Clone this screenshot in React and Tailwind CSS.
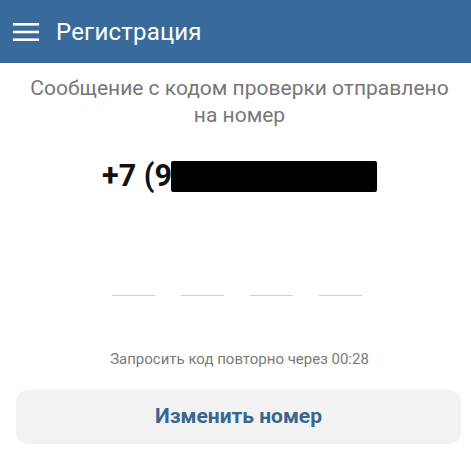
export default function App() {
  return (
    <div className="w-[471px] h-[452px] bg-white flex flex-col" style={{ fontFamily: 'Roboto, "Noto Sans", sans-serif' }}>
      {/* Header */}
      <div className="h-[63px] bg-[#386b9b] flex items-center px-[13px] shrink-0">
        <svg width="26" height="18" viewBox="0 0 26 18" className="shrink-0">
          <rect x="0" y="0" width="26" height="2.6" fill="#fff" />
          <rect x="0" y="7.7" width="26" height="2.6" fill="#fff" />
          <rect x="0" y="15.4" width="26" height="2.6" fill="#fff" />
        </svg>
        <span className="ml-[17px] text-white text-[24px] leading-none tracking-[0.2px]">Регистрация</span>
      </div>

      {/* Body */}
      <div className="flex flex-col items-center pl-[8px]">
        <p className="mt-[12px] text-center text-[#777] text-[21px] leading-[27px]">
          Сообщение с кодом проверки отправлено
          <br />
          на номер
        </p>

        <div className="mt-[30px] flex items-center h-[34px]">
          <span className="text-[30.5px] font-bold text-[#111] leading-none">+7 (9</span>
          <span className="w-[206px] h-[31px] bg-black rounded-[2px] -ml-[1px]" />
        </div>

        <div className="mt-[102px] -ml-[6px] flex gap-[26px]">
          <span className="w-[43px] h-[1px] bg-[#cfcfcf]" />
          <span className="w-[43px] h-[1px] bg-[#cfcfcf]" />
          <span className="w-[43px] h-[1px] bg-[#cfcfcf]" />
          <span className="w-[43px] h-[1px] bg-[#cfcfcf]" />
        </div>

        <p className="mt-[56px] text-[15px] text-[#7a7a7a] leading-none">Запросить код повторно через 00:28</p>
      </div>

      <div className="pl-[16px] pr-[10px] mt-[23px]">
        <button className="w-full h-[54px] rounded-[12px] bg-[#f2f2f2] text-[#386690] text-[21px] font-bold">
          Изменить номер
        </button>
      </div>
    </div>
  );
}
